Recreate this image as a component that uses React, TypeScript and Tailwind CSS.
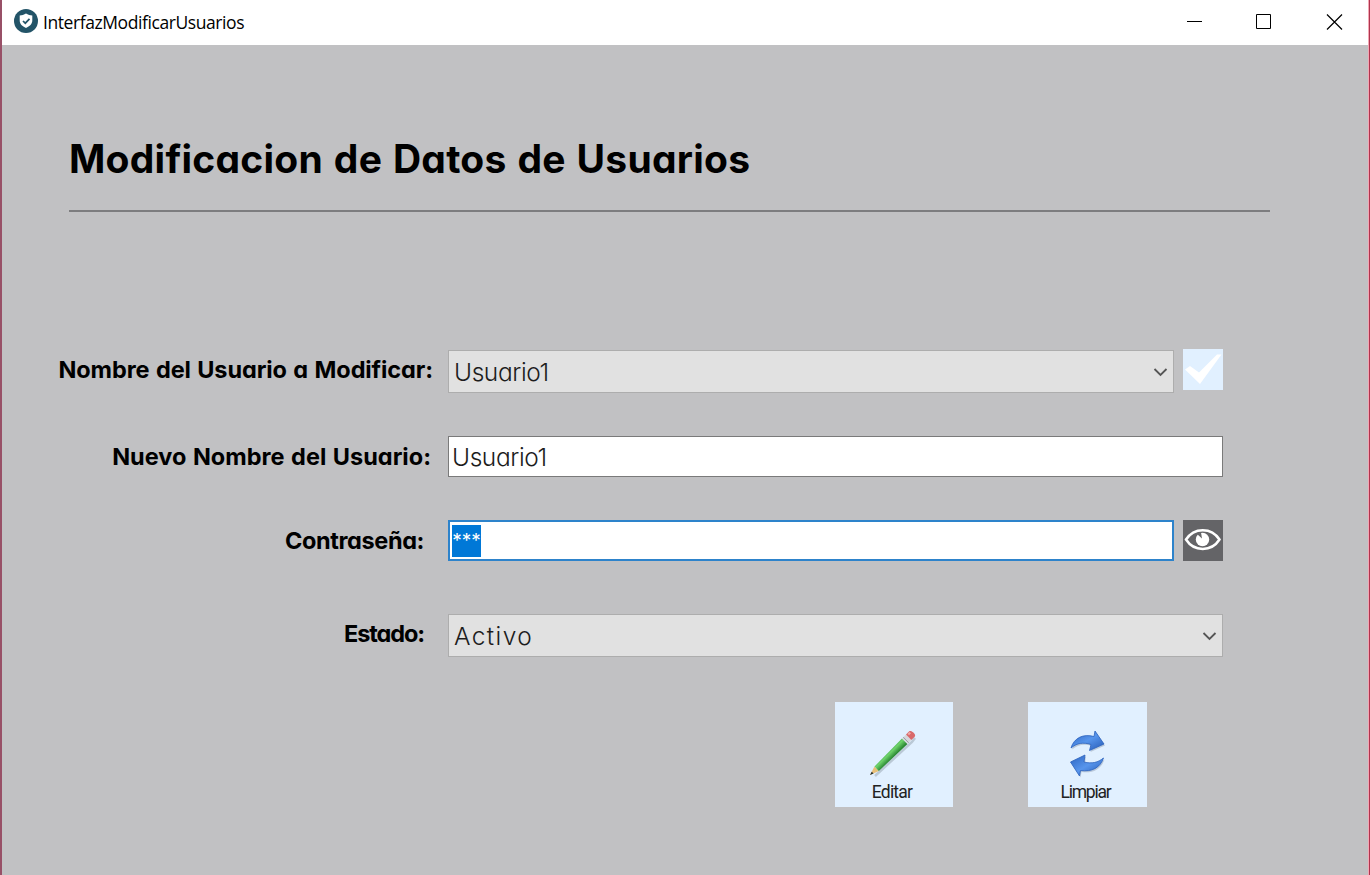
import React from "react";

const gothic = "font-['Inter','Open_Sans',sans-serif] [font-feature-settings:'cv11'] whitespace-nowrap";

function Label({ text, className }: { text: string; className: string }) {
  return (
    <div className={`flex w-[446px] shrink-0 justify-end text-[23.5px] leading-[30px] font-bold text-black ${gothic} ${className}`}>
      <span>{text}</span>
    </div>
  );
}

function Combo({ value, className }: { value: string; className: string }) {
  return (
    <div className={`flex h-[43px] items-center justify-between border border-[#adadad] bg-[#e1e1e1] pt-[2px] pr-[5px] pl-[5px] text-[24.5px] font-light text-[#1c1c1c] ${gothic} ${className}`}>
      <span>{value}</span>
      <svg width="15" height="10" viewBox="0 0 15 10" fill="none" stroke="#555" strokeWidth="1.8">
        <path d="M1.5 1 7.5 7 13.5 1" />
      </svg>
    </div>
  );
}

function ShieldLogo() {
  return (
    <svg width="24" height="24" viewBox="0 0 24 24">
      <circle cx="12" cy="12" r="12" fill="#235468" />
      <path d="M12 4.5c2 1.4 4 1.8 6.3 1.9v5.2c0 3.4-2.6 5.8-6.3 7.4-3.7-1.6-6.3-4-6.3-7.4V6.4C8 6.3 10 5.9 12 4.5z" fill="#fff" />
      <path d="m9 12 2.3 2.2 4.2-4.3" fill="none" stroke="#235468" strokeWidth="1.7" />
    </svg>
  );
}

function EyeIcon() {
  return (
    <svg width="40" height="41" viewBox="0 0 40 41">
      <path d="M3 19.500C11 7 28.500 7 36.500 19.500 28.500 32 11 32 3 19.500z" fill="none" stroke="#fff" strokeWidth="2.500" />
      <circle cx="19.500" cy="19.500" r="6.700" fill="#fff" />
      <path d="M14 14 19 18.500 18 12.500z" fill="#646467" />
    </svg>
  );
}

function PencilIcon() {
  return (
    <svg width="50" height="48" viewBox="0 0 50 48">
      <defs>
        <linearGradient id="wood" gradientUnits="userSpaceOnUse" x1="19" y1="21" x2="25" y2="27">
          <stop offset="0" stopColor="#36a03e" />
          <stop offset="0.400" stopColor="#6fd46c" />
          <stop offset="1" stopColor="#2c8a35" />
        </linearGradient>
      </defs>
      <path d="M7 46 44 12l3-4" fill="none" stroke="#8b9aa5" strokeOpacity="0.450" strokeWidth="2.500" />
      <path d="M2 45 6.500 36.500 10.800 41z" fill="#e8c078" />
      <path d="M2 45 3.700 41.700 5.600 43.500z" fill="#28302c" />
      <path d="M6.500 36.500 34 8.500 39.500 14 10.800 41z" fill="url(#wood)" />
      <path d="M34 8.500 38 4.500 43.300 10 39.500 14z" fill="#d5d7dc" />
      <path d="M35.300 7.200 40.700 12.700" stroke="#999da5" />
      <path d="M38 4.500 41 1.500C43-.5 49 4.500 46.500 7L43.300 10z" fill="#d9696b" />
      <path d="M39.500 3.800 41.500 2 43 3.300 41 5.300z" fill="#f0aaa8" />
    </svg>
  );
}

function RefreshIcon() {
  return (
    <svg width="38" height="50" viewBox="0 0 38 50">
      <defs>
        <linearGradient id="arrow" x1="0" y1="0" x2="1" y2="1">
          <stop offset="0" stopColor="#2b63c0" />
          <stop offset="0.500" stopColor="#5795ec" />
          <stop offset="1" stopColor="#2458b4" />
        </linearGradient>
      </defs>
      <g fill="#8c9aad" opacity="0.450" transform="translate(1 1.500)">
        <path d="M2 19C5 9 14 4.500 25 7.500L26 2l9 13-14.500 6.500 1.500-6C14 13 8 14 2 19z" />
        <path d="M34.500 29C31 39 23 43 11.500 41.500L10.500 47 1.500 33 16 26l-1 7C23 35 29 33.500 34.500 29z" />
      </g>
      <g fill="url(#arrow)" stroke="#2c62bd" strokeWidth="0.800">
        <path d="M2 19C5 9 14 4.500 25 7.500L26 2l9 13-14.500 6.500 1.500-6C14 13 8 14 2 19z" />
        <path d="M34.500 29C31 39 23 43 11.500 41.500L10.500 47 1.500 33 16 26l-1 7C23 35 29 33.500 34.500 29z" />
      </g>
    </svg>
  );
}

export default function App() {
  return (
    <div className="flex h-[875px] w-[1370px] overflow-hidden">
      <div className="w-[2px] shrink-0 bg-[#985067]" />
      <main className="flex w-[1366px] shrink-0 flex-col bg-[#c1c1c3]">
        <header className="flex h-[45px] shrink-0 items-start bg-white pt-[9px] pl-[12px]">
          <ShieldLogo />
          <span className="ml-[5px] font-['Open_Sans','Noto_Sans',sans-serif] text-[17.5px] leading-[26px] tracking-[-0.42px] text-black">InterfazModificarUsuarios</span>
          <svg className="mt-[4px] mr-[24px] ml-auto" width="158" height="18" viewBox="0 0 158 18" fill="none" stroke="#000" strokeWidth="1">
            <path d="M1 8.500H16M70.500 1.500h14v14h-14z" />
            <path d="M141 1.500 156 16.500M156 1.500 141 16.500" strokeWidth="1.200" />
          </svg>
        </header>

        <h1 className={`mt-[90px] ml-[67px] h-[50px] text-[39px] leading-[48px] font-bold tracking-[0.25px] [word-spacing:1.3px] text-black ${gothic}`}>
          <span>Modificacion de Datos de Usuarios</span>
        </h1>
        <div className="mt-[25px] ml-[67px] h-[2px] w-[1201px] shrink-0 bg-[#7d7d7f]" />

        <div className="mt-[137px] flex h-[44px] shrink-0 items-start">
          <Label text="Nombre del Usuario a Modificar:" className="mt-[6px] pr-[15px] tracking-[-0.1px] [word-spacing:1px]" />
          <Combo value="Usuario1" className="mt-[1px] w-[726px] tracking-[-0.4px]" />
          <div className="ml-[9px] h-[41px] w-[40px] bg-[#e1f0ff]">
            <svg width="40" height="41" viewBox="0 0 40 41">
              <path d="M2 20.500 7 17 16 23.500 34 5.500 38.500 5.500 17 35z" fill="#fff" />
            </svg>
          </div>
        </div>

        <div className="mt-[43px] flex h-[41px] shrink-0 items-start">
          <Label text="Nuevo Nombre del Usuario:" className="mt-[6px] pr-[17px] [word-spacing:1px]" />
          <div className={`flex h-[41px] w-[775px] items-center border border-[#7a7a7a] bg-white pt-[2px] pl-[3px] text-[24.5px] font-light tracking-[-0.4px] text-[#1c1c1c] ${gothic}`}>
            <span>Usuario1</span>
          </div>
        </div>

        <div className="mt-[43px] flex h-[41px] shrink-0 items-start">
          <Label text="Contraseña:" className="mt-[6px] pr-[24px] tracking-[-0.4px]" />
          <div className="flex h-[41px] w-[726px] items-center border-2 border-[#2d83cb] bg-white pl-[2px]">
            <div className={`flex h-[32px] w-[29px] justify-center bg-[#0078d7] text-[19px] leading-[32px] text-white ${gothic}`}>
              <span>***</span>
            </div>
          </div>
          <div className="ml-[9px] h-[41px] w-[40px] bg-[#646467]">
            <EyeIcon />
          </div>
        </div>

        <div className="mt-[53px] flex h-[43px] shrink-0 items-start">
          <Label text="Estado:" className="mt-[5px] pr-[24px] tracking-[-1.1px]" />
          <Combo value="Activo" className="w-[775px] tracking-[1.4px]" />
        </div>

        <div className="mt-[45px] ml-[833px] flex gap-[75px] font-['Roboto','Liberation_Sans',sans-serif] text-[17.5px] leading-[20px] text-[#222]">
          <button className="flex h-[105px] w-[118px] flex-col items-center bg-[#e1f0ff] pt-[28px]">
            <div className="mr-[3px]">
              <PencilIcon />
            </div>
            <span className="mt-[4px] mr-[4px] tracking-[-0.8px]">Editar</span>
          </button>
          <button className="flex h-[105px] w-[119px] flex-col items-center bg-[#e1f0ff] pt-[27px]">
            <RefreshIcon />
            <span className="mt-[3px] mr-[4px] tracking-[-1.2px]">Limpiar</span>
          </button>
        </div>
      </main>
      <div className="w-px shrink-0 bg-[#f3a6b3]" />
      <div className="w-px shrink-0 bg-[#b0344f]" />
    </div>
  );
}
